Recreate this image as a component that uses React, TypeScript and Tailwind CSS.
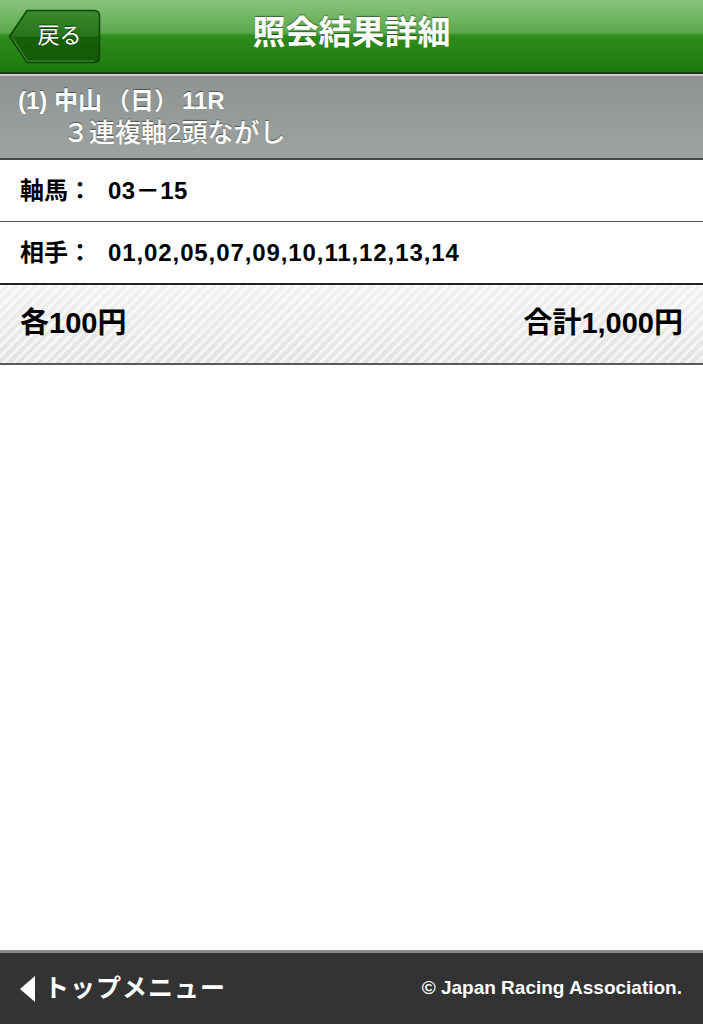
const JP = "font-['Liberation_Sans','Noto_Sans_CJK_JP',sans-serif]"

function BackButton() {
  return (
    <button className="relative ml-[8px] h-[55px] w-[93px]">
      <svg className="absolute inset-0" width="93" height="55" viewBox="0 0 93 55">
        <defs>
          <linearGradient id="backGrad" x1="0" y1="0" x2="0" y2="1">
            <stop offset="0%" stopColor="#3a8a2d" />
            <stop offset="48%" stopColor="#27751b" />
            <stop offset="52%" stopColor="#166107" />
            <stop offset="100%" stopColor="#125804" />
          </linearGradient>
        </defs>
        <path
          d="M1.5 27.5 L19 1.5 H86 Q91.5 1.5 91.5 7 V48 Q91.5 53.5 86 53.5 H19 Z"
          fill="url(#backGrad)"
          stroke="#0f4506"
          strokeWidth="1.5"
        />
        <path d="M4 28.5 L19.5 52 H86" fill="none" stroke="#7fbf6f" strokeOpacity="0.55" strokeWidth="1" />
      </svg>
      <span className={`relative pl-[10px] text-[22px] leading-[28px] text-white ${JP} [text-shadow:0_-1px_0_rgba(0,0,0,0.5)]`}>
        戻る
      </span>
    </button>
  )
}

export default function App() {
  return (
    <div className={`flex min-h-[1024px] w-full flex-col bg-white ${JP}`}>
      <header className="relative flex h-[74px] items-center border-b-2 border-[#1f3a1a] bg-[linear-gradient(to_bottom,#8cc47e_0%,#5aa84b_45%,#2f8c1c_50%,#1b7b09_100%)]">
        <BackButton />
        <h1 className="pointer-events-none absolute inset-x-0 top-[12px] text-center text-[33px] font-bold leading-[42px] text-white [text-shadow:0_-1px_1px_rgba(0,0,0,0.45)]">
          照会結果詳細
        </h1>
      </header>
      <div className="h-[2px] bg-[#c9ccca]" />

      <section className="flex h-[84px] flex-col justify-center border-b-2 border-[#4a4a4a] bg-[linear-gradient(to_bottom,#8f9492,#9da3a1)] pl-[18px] text-white [text-shadow:0_-1px_1px_rgba(0,0,0,0.45)]">
        <p className="text-[24px] font-bold leading-[31px]">
          (1) 中山<span className="mx-[4px]">（日）</span>11R
        </p>
        <p className="pl-[45px] text-[26px] font-medium leading-[34px]">３連複軸2頭ながし</p>
      </section>

      <div className="flex h-[62px] items-center border-b border-[#555] px-[20px] text-[24px] font-bold text-black">
        <span>軸馬：</span>
        <span className="ml-[16px] tracking-[0.5px]">03－15</span>
      </div>
      <div className="flex h-[63px] items-center border-b-2 border-[#222] px-[20px] text-[24px] font-bold text-black">
        <span>相手：</span>
        <span className="ml-[16px] tracking-[0.9px]">01,02,05,07,09,10,11,12,13,14</span>
      </div>

      <div className="flex h-[80px] items-center justify-between border-b-2 border-[#5a5a5a] bg-[repeating-linear-gradient(135deg,rgba(255,255,255,0.6)_0px,rgba(255,255,255,0.6)_3px,transparent_3px,transparent_7px),linear-gradient(to_bottom,#f2f2f2,#e3e3e3)] px-[20px] text-[29px] font-bold text-black">
        <span>各100円</span>
        <span>合計1,000円</span>
      </div>

      <div className="flex-1" />

      <footer className="flex h-[74px] items-center justify-between border-t-[3px] border-[#8c8c8c] bg-[#333333] pl-[20px] pr-[21px] text-white">
        <div className="flex items-center gap-[9px]">
          <svg width="15" height="26" viewBox="0 0 15 26">
            <path d="M15 0 V26 L0 13 Z" fill="#ffffff" />
          </svg>
          <span className="text-[25px] font-bold tracking-[1px]">トップメニュー</span>
        </div>
        <span className="text-[19px] font-bold">© Japan Racing Association.</span>
      </footer>
    </div>
  )
}
